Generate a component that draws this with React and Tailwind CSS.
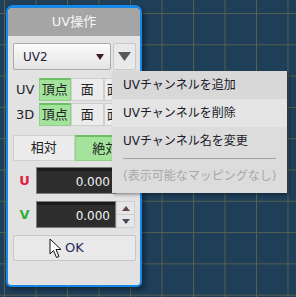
import React from "react";

const F = "font-['DejaVu_Sans','Noto_Sans_CJK_JP',sans-serif]";

function Toggle({ children, on, w = "w-[33px]" }) {
  return (
    <div
      className={`${w} h-full flex items-center justify-center border ${
        on
          ? "bg-[#a3e39c] border-[#8fcf88] border-t-[#6cc064] border-t-2"
          : "bg-[#ececec] border-[#cfcfcf]"
      } text-[13px] text-[#222]`}
    >
      {children}
    </div>
  );
}

function Spinner() {
  return (
    <div className="w-[19px] h-full flex flex-col border border-[#cfcfcf] bg-[#e6e6e6]">
      <div className="flex-1 flex items-center justify-center border-b border-[#cfcfcf]">
        <svg width="8" height="5" viewBox="0 0 8 5"><path d="M0 5 L4 0 L8 5Z" fill="#5a4a4a" /></svg>
      </div>
      <div className="flex-1 flex items-center justify-center">
        <svg width="8" height="5" viewBox="0 0 8 5"><path d="M0 0 L4 5 L8 0Z" fill="#4a4a5a" /></svg>
      </div>
    </div>
  );
}

function NumField({ label, color }) {
  return (
    <div className="flex items-center h-[27px]">
      <div className={`w-[23px] text-center text-[13px] font-bold ${color}`}>{label}</div>
      <div className="w-[80px] h-full flex flex-col border border-[#7c7c7c] bg-[#2d2d2d]">
        <div className="h-[3px] bg-[#1b1b1b]" />
        <div className="flex-1 flex items-center justify-end pr-[5px] text-[12px] text-[#f2f2f2]">0.000</div>
      </div>
      <Spinner />
    </div>
  );
}

export default function App() {
  return (
    <div
      className={`relative w-[296px] h-[297px] overflow-hidden bg-[#1f3e58] bg-[linear-gradient(to_right,#55604f_1px,transparent_1px),linear-gradient(to_bottom,#55604f_1px,transparent_1px)] bg-[size:31.5px_31.3px] bg-[position:4px_13px] pt-[5px] pl-[6px] ${F}`}
    >
      <div className="w-[136px] h-[282px] border-2 border-t-[3px] border-[#1689e8] rounded-t-[7px] rounded-b-[5px] bg-[#e2e2e2] overflow-hidden flex flex-col shadow-[3px_3px_4px_rgba(0,0,0,0.35)]">
        <div className="h-[28px] bg-[#a5a5a5] flex items-center justify-center text-[13px] text-[#f6f6f6]">
          UV操作
        </div>
        <div className="flex flex-col pl-[5px] pr-[4px]">
          <div className="mt-[7px] h-[27px] flex gap-[2px]">
            <div className="w-[98px] h-full flex items-center justify-between pl-[9px] pr-[6px] border border-[#a9a9a9] rounded-[2px] bg-[linear-gradient(to_bottom,#fbfbfb,#e4e4e4)] text-[12px] text-[#2a1838]">
              <span>UV2</span>
              <svg width="8" height="6" viewBox="0 0 8 6"><path d="M0 0 L8 0 L4 6Z" fill="#3a2020" /></svg>
            </div>
            <div className="w-[23px] h-full flex items-center justify-center border border-[#c9c9c9] rounded-[2px] bg-[#e9e9e9]">
              <svg width="13" height="9" viewBox="0 0 13 9"><path d="M0 0 L13 0 L6.5 9Z" fill="#585858" /></svg>
            </div>
          </div>

          <div className="mt-[8px] h-[23px] flex items-center">
            <div className="w-[26px] pl-[3px] text-[13px] text-[#222]">UV</div>
            <Toggle on>頂点</Toggle>
            <Toggle>面</Toggle>
            <Toggle>面群</Toggle>
          </div>
          <div className="mt-[2px] h-[23px] flex items-center">
            <div className="w-[26px] pl-[3px] text-[13px] text-[#222]">3D</div>
            <Toggle on>頂点</Toggle>
            <Toggle>面</Toggle>
            <Toggle>面群</Toggle>
          </div>

          <div className="mt-[9px] h-[26px] flex">
            <Toggle w="w-[62px]">相対</Toggle>
            <Toggle w="w-[62px]" on>絶対</Toggle>
          </div>

          <div className="mt-[6px]">
            <NumField label="U" color="text-[#e0203c]" />
          </div>
          <div className="mt-[7px]">
            <NumField label="V" color="text-[#2fae3a]" />
          </div>

          <div className="mt-[7px] relative h-[26px] w-[123px] flex items-center justify-center border border-[#c6c6c6] rounded-[2px] bg-[#e9e9e9] text-[13px] text-[#1e2a58]">
            OK
            <svg className="absolute left-[35px] top-[2px]" width="13" height="21" viewBox="0 0 13 21">
              <path d="M1 1 L1 16 L4.5 12.5 L7.5 19.5 L10 18.5 L7 11.5 L12 11.5 Z" fill="#fff" stroke="#111" strokeWidth="1" strokeLinejoin="round" />
            </svg>
          </div>
        </div>
      </div>

      <div className="absolute left-[112px] top-[71px] w-[175px] h-[122px] bg-[#dcdcdc] flex flex-col text-[12px] shadow-[2px_2px_3px_rgba(0,0,0,0.3)]">
        <div className="h-[28px] flex items-center pl-[11px] bg-[#d8d8d8] text-[#1a1a2a]">UVチャンネルを追加</div>
        <div className="h-[28px] flex items-center pl-[11px] bg-[#e4e4e4] text-[#1a1a2a]">UVチャンネルを削除</div>
        <div className="h-[28px] flex items-center pl-[11px] bg-[#dcdcdc] text-[#1a1a2a]">UVチャンネル名を変更</div>
        <div className="mx-[11px] mt-[3px] h-[1px] bg-[#a4a4a4]" />
        <div className="flex-1 flex items-center pl-[11px] text-[#a8a8a8]">(表示可能なマッピングなし)</div>
      </div>
    </div>
  );
}
